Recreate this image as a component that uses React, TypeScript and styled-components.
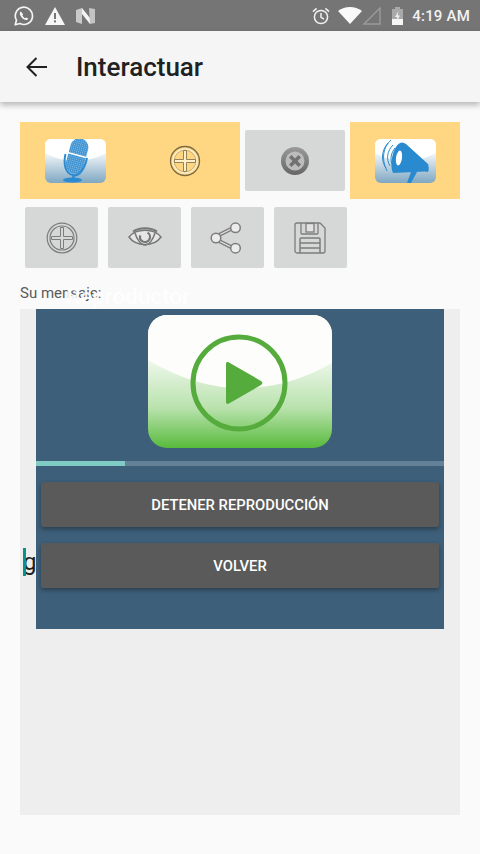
import React from "react";
import styled, { createGlobalStyle } from "styled-components";

const Global = createGlobalStyle`
  html, body { margin: 0; padding: 0; background: #fafafa; }
  body { font-family: Roboto, "Liberation Sans", sans-serif; }
  #root { width: 480px; height: 854px; overflow: hidden; }
  * { box-sizing: border-box; }
`;

const Page = styled.div`
  position: relative;
  width: 480px;
  height: 854px;
  background: #fafafa;
  display: flex;
  flex-direction: column;
`;

const StatusBar = styled.div`
  height: 31px;
  flex: none;
  background: #757575;
  display: flex;
  align-items: center;
  padding: 0 10px 0 14px;
  color: #f2f2f2;
`;

const StatusLeft = styled.div`
  display: flex;
  align-items: center;
  gap: 11px;
  flex: 1;
`;

const StatusRight = styled.div`
  display: flex;
  align-items: center;
`;

const Clock = styled.span`
  font-size: 15px;
  font-weight: 500;
  letter-spacing: 0.2px;
  margin-left: 9px;
`;

const AppBar = styled.header`
  height: 71px;
  flex: none;
  background: #f5f5f5;
  display: flex;
  align-items: center;
  padding-left: 24px;
  box-shadow: 0 3px 6px rgba(0, 0, 0, 0.28);
  position: relative;
  z-index: 1;
`;

const Title = styled.h1`
  margin: 0 0 0 28px;
  font-size: 26px;
  font-weight: 500;
  color: #212121;
`;

const Content = styled.main`
  flex: 1;
  display: flex;
  flex-direction: column;
  padding: 20px 20px 39px;
`;

const TopRow = styled.div`
  display: flex;
  align-items: center;
  gap: 5px;
  height: 77px;
`;

const HighlightCell = styled.div<{ $w: number }>`
  width: ${(p) => p.$w}px;
  height: 77px;
  background: #ffd782;
  display: flex;
  align-items: center;
  padding-left: 25px;
`;

const PlusSlot = styled.div`
  margin-left: 63px;
  display: flex;
`;

const GrayButton = styled.div<{ $w: number; $h: number }>`
  width: ${(p) => p.$w}px;
  height: ${(p) => p.$h}px;
  background: #d6d7d7;
  border-radius: 2px;
  display: flex;
  align-items: center;
  justify-content: center;
`;

const ToolRow = styled.div`
  display: flex;
  gap: 10px;
  margin: 8px 0 0 5px;
`;

const Label = styled.div`
  margin-top: 17px;
  height: 16px;
  font-size: 15px;
  line-height: 16px;
  color: #5a5a5a;
`;

const TextArea = styled.div`
  flex: 1;
  margin-top: 8px;
  background: #eeeeee;
  display: flex;
  align-items: center;
  padding-left: 3px;
`;

const Typed = styled.div`
  position: relative;
  font-size: 24px;
  line-height: 28px;
  height: 28px;
  color: #212121;
`;

const Caret = styled.span`
  position: absolute;
  left: 0;
  top: 0;
  width: 3px;
  height: 28px;
  background: #009688;
`;

const Dialog = styled.section`
  position: absolute;
  left: 36px;
  top: 283px;
  width: 408px;
`;

const DialogTitle = styled.div`
  height: 26px;
  padding-left: 30px;
  font-size: 22.5px;
  font-weight: 500;
  line-height: 26px;
  color: rgba(255, 255, 255, 0.93);
`;

const DialogPanel = styled.div`
  height: 320px;
  background: #3d5f79;
  display: flex;
  flex-direction: column;
`;

const PlayWrap = styled.div`
  display: flex;
  justify-content: center;
  padding-top: 6px;
  height: 152px;
`;

const Track = styled.div`
  height: 5px;
  background: #648197;
`;

const Fill = styled.div`
  height: 100%;
  background: #80cbc4;
`;

const Actions = styled.div`
  display: flex;
  flex-direction: column;
  gap: 16px;
  padding: 16px 5px 0;
`;

const ActionButton = styled.button`
  height: 45px;
  border: 0;
  border-radius: 2px;
  background: #5a5a5a;
  color: #fff;
  font-family: Roboto, sans-serif;
  font-size: 14.8px;
  font-weight: 500;
  box-shadow: 0 2px 4px rgba(0, 0, 0, 0.35);
`;

const WhatsApp = () => (
  <svg width="20" height="20" viewBox="0 0 20 20" fill="none">
    <path d="M1.2 18.8l1.3-4.6A8.6 8.6 0 1 1 6 17.5z" stroke="#f4f4f4" strokeWidth="1.7" strokeLinejoin="round" />
    <path d="M7 5.6c-.6.2-1.3 1-1.2 2.1.2 2.6 3.4 6 6.3 6.4 1.2.1 2.1-.7 2.2-1.5l-2.200-1.200-1 .9c-1-.4-2.200-1.600-2.700-2.700l.8-1z" fill="#f4f4f4" />
  </svg>
);

const Warning = () => (
  <svg width="20" height="18" viewBox="0 0 20 18">
    <path d="M10 0L20 18H0z" fill="#f6f6f6" />
    <rect x="9" y="6" width="2" height="6" fill="#757575" />
    <rect x="9" y="13.4" width="2" height="2" fill="#757575" />
  </svg>
);

const NLogo = () => (
  <svg width="19" height="16" viewBox="0 0 19 16">
    <path d="M0 2l6-2v16l-6-2z" fill="#c9c9c9" />
    <path d="M6 0l8 10v6L6 6z" fill="#f4f4f4" />
    <path d="M13 0l6 1v14l-5 1z" fill="#c4c4c4" />
  </svg>
);

const Alarm = () => (
  <svg width="18" height="18" viewBox="0 0 18 18" fill="none" stroke="#f2f2f2" strokeWidth="1.5">
    <circle cx="9" cy="10" r="6.6" />
    <path d="M9 6v4.300l3 1.800" />
    <path d="M1 4.600L4.600 1.400M17 4.600L13.400 1.400" />
  </svg>
);

const Wifi = () => (
  <svg width="24" height="17" viewBox="0 0 24 17" style={{ marginLeft: 8 }}>
    <path d="M0 4C7-1.300 17-1.300 24 4L12 17z" fill="#fafafa" />
  </svg>
);

const Signal = () => (
  <svg width="18" height="18" viewBox="0 0 18 18" fill="none" style={{ marginLeft: 1 }}>
    <path d="M1 17L17 1v16z" stroke="#9b9b9b" strokeWidth="1.4" />
  </svg>
);

const Battery = () => (
  <svg width="11" height="18" viewBox="0 0 11 18" style={{ marginLeft: 11 }}>
    <path d="M3 0h5v2h3v16H0V2h3z" fill="#a9a9a9" />
    <rect y="12" width="11" height="6" fill="#f6f6f6" />
    <path d="M6.500 4L3 10h2.300L4.500 14.500 8 8.500H5.700z" fill="#ededed" />
  </svg>
);

const BackArrow = () => (
  <svg width="24" height="24" viewBox="0 0 24 24" fill="none" stroke="#212121" strokeWidth="2">
    <path d="M23 12H3.500M12.500 3l-9 9 9 9" />
  </svg>
);

const Tile = ({ id, children }: { id: string; children?: React.ReactNode }) => (
  <svg width="61" height="44" viewBox="0 0 61 44">
    <defs>
      <linearGradient id={id} x1="0" y1="0" x2="0" y2="1">
        <stop offset="0.25" stopColor="#fff" />
        <stop offset="1" stopColor="#7fa7c2" />
      </linearGradient>
    </defs>
    <rect width="61" height="44" rx="6" fill={`url(#${id})`} />
    <path d="M0 14Q30.500 30 61 14V6a6 6 0 0 0-6-6H6a6 6 0 0 0-6 6z" fill="#fff" />
    {children}
  </svg>
);

const MicTile = () => (
  <Tile id="micG">
    <defs>
      <pattern id="micDots" width="2" height="2" patternUnits="userSpaceOnUse">
        <rect width="2" height="2" fill="#3f93d2" />
        <rect width="1" height="1" fill="#8cc0e6" />
      </pattern>
    </defs>
    <rect x="23" y="-1" width="18" height="36" rx="9" fill="url(#micDots)" transform="rotate(15 32 17)" />
    <path d="M22.500 13.500L41 18.500" stroke="#fff" strokeWidth="1.500" />
    <path d="M20.500 15c-2 9-1 19 7 21 6 2 12-5 14.500-17" fill="none" stroke="#2c8bd0" strokeWidth="2" />
    <path d="M29 36l-1.500 5" stroke="#2c8bd0" strokeWidth="2.500" />
    <ellipse cx="27.500" cy="41" rx="9.500" ry="2.500" fill="#2c8bd0" />
  </Tile>
);

const MegaphoneTile = () => (
  <Tile id="megG">
    <path d="M25 4c2-1 4-.5 6 1l22 20c1 3 1 6 0 8l-3-.5-32 1.500c-2-4-2-9-1-15 1-6 4-13 8-15z" fill="#2a8acf" />
    <ellipse cx="24" cy="19" rx="3" ry="7.500" fill="#fff" transform="rotate(8 24 19)" />
    <path d="M36 33l6 0-6 11h-4z" fill="#2a8acf" />
    <path d="M16 1C8 8 6 20 12 32M13 4C6 12 6 22 11 29M18 6c-6 6-7 14-3 21M20 9c-4 5-5 11-3 16" fill="none" stroke="#2a8acf" strokeWidth="1" />
  </Tile>
);

const PlusCircleGold = () => (
  <svg width="32" height="32" viewBox="0 0 32 32" fill="none">
    <circle cx="16" cy="16" r="14.500" stroke="#7c6a45" strokeWidth="1.300" />
    <circle cx="16" cy="16" r="12" stroke="#fbeecb" strokeWidth="1.500" />
    <circle cx="16" cy="16" r="10.800" stroke="#b49e6d" strokeWidth="0.700" />
    <path d="M14.500 5.500h3v9h9v3h-9v9h-3v-9h-9v-3h9z" fill="#fff0c8" stroke="#8a7750" strokeWidth="0.900" />
  </svg>
);

const CancelKnob = () => (
  <svg width="28" height="28" viewBox="0 0 28 28">
    <defs>
      <linearGradient id="knob" x1="0" y1="0" x2="0" y2="1">
        <stop offset="0" stopColor="#9a9a9a" />
        <stop offset="1" stopColor="#666" />
      </linearGradient>
    </defs>
    <circle cx="14" cy="14" r="14" fill="url(#knob)" />
    <circle cx="14" cy="14" r="9.500" fill="#bcbcbc" />
    <path d="M10.500 8L14 11.500 17.500 8 20 10.500 16.500 14 20 17.500 17.500 20 14 16.500 10.500 20 8 17.500 11.500 14 8 10.500z" fill="#727272" />
  </svg>
);

const PlusCircleGray = () => (
  <svg width="32" height="32" viewBox="0 0 32 32" fill="none" stroke="#7d7d7d">
    <circle cx="16" cy="16" r="14.800" strokeWidth="1.200" />
    <circle cx="16" cy="16" r="12" strokeWidth="1.200" />
    <path d="M14.500 5.500h3v9h9v3h-9v9h-3v-9h-9v-3h9z" strokeWidth="1" />
  </svg>
);

const Eye = () => (
  <svg width="34" height="24" viewBox="0 0 34 24" fill="none" stroke="#777">
    <path d="M1 11C8 2 26 2 33 11 26 21 8 21 1 11z" fill="#e6e6e6" strokeWidth="1.500" />
    <path d="M7 7c2 7 6 12 10 12s8-5 10-12" strokeWidth="1.500" />
    <circle cx="17" cy="11" r="5" strokeWidth="2.200" strokeDasharray="22 10" transform="rotate(-60 17 11)" />
    <path d="M5 5.500C11 1 23 1 29 5.500" strokeWidth="2" />
  </svg>
);

const Share = () => (
  <svg width="32" height="32" viewBox="0 0 32 32" fill="none" stroke="#7d7d7d" strokeWidth="1.500" style={{ marginLeft: -4 }}>
    <path d="M6 14.500L25 5M6 17.500L25 27" stroke="#7d7d7d" strokeWidth="4" />
    <path d="M6 14.500L25 5M6 17.500L25 27" stroke="#e6e6e6" strokeWidth="1.200" />
    <circle cx="25.500" cy="5.800" r="4.800" fill="#ececec" />
    <circle cx="25.500" cy="26.200" r="4.800" fill="#ececec" />
    <circle cx="6" cy="16" r="4.800" fill="#ececec" />
  </svg>
);

const Floppy = () => (
  <svg width="32" height="32" viewBox="0 0 32 32" fill="none" stroke="#7d7d7d" strokeWidth="1.300" style={{ marginLeft: -1 }}>
    <path d="M1 3a2 2 0 0 1 2-2h23l5 5v23a2 2 0 0 1-2 2H3a2 2 0 0 1-2-2z" />
    <path d="M7 1v10a1 1 0 0 0 1 1h15a1 1 0 0 0 1-1V1" />
    <rect x="12" y="1.500" width="8" height="8.500" fill="#e2e2e2" />
    <path d="M6 31V17a1 1 0 0 1 1-1h18a1 1 0 0 1 1 1v14M6 21h20M6 26h20" strokeWidth="1.500" />
  </svg>
);

const PlayTile = () => (
  <svg width="184" height="133" viewBox="0 0 184 133">
    <defs>
      <linearGradient id="playG" x1="0" y1="0" x2="0" y2="1">
        <stop offset="0.3" stopColor="#f4faf2" />
        <stop offset="0.7" stopColor="#b9e2ad" />
        <stop offset="1" stopColor="#58bb3c" />
      </linearGradient>
    </defs>
    <rect width="184" height="133" rx="19" fill="url(#playG)" />
    <path d="M0 45Q92 100 184 48V19A19 19 0 0 0 165 0H19A19 19 0 0 0 0 19z" fill="#fdfefb" />
    <circle cx="91" cy="68" r="46" fill="none" stroke="#55ac3d" strokeWidth="5" />
    <path d="M78 49c0-2 1.500-2.500 3-1.500l32 18.500c1.800 1 1.800 3 0 4L81 88.500c-1.500 1-3 .5-3-1.500z" fill="#55ac3d" />
  </svg>
);

export default function App() {
  return (
    <Page>
      <Global />
      <StatusBar>
        <StatusLeft>
          <WhatsApp />
          <Warning />
          <NLogo />
        </StatusLeft>
        <StatusRight>
          <Alarm />
          <Wifi />
          <Signal />
          <Battery />
          <Clock>4:19 AM</Clock>
        </StatusRight>
      </StatusBar>
      <AppBar>
        <BackArrow />
        <Title>Interactuar</Title>
      </AppBar>
      <Content>
        <TopRow>
          <HighlightCell $w={220}>
            <MicTile />
            <PlusSlot>
              <PlusCircleGold />
            </PlusSlot>
          </HighlightCell>
          <GrayButton $w={100} $h={61}>
            <CancelKnob />
          </GrayButton>
          <HighlightCell $w={110}>
            <MegaphoneTile />
          </HighlightCell>
        </TopRow>
        <ToolRow>
          <GrayButton $w={73} $h={61}>
            <PlusCircleGray />
          </GrayButton>
          <GrayButton $w={73} $h={61}>
            <Eye />
          </GrayButton>
          <GrayButton $w={73} $h={61}>
            <Share />
          </GrayButton>
          <GrayButton $w={73} $h={61}>
            <Floppy />
          </GrayButton>
        </ToolRow>
        <Label>Su mensaje:</Label>
        <TextArea>
          <Typed>
            gu
            <Caret />
          </Typed>
        </TextArea>
      </Content>
      <Dialog>
        <DialogTitle>Reproductor</DialogTitle>
        <DialogPanel>
          <PlayWrap>
            <PlayTile />
          </PlayWrap>
          <Track>
            <Fill style={{ width: `${(89 / 408) * 100}%` }} />
          </Track>
          <Actions>
            <ActionButton>DETENER REPRODUCCIÓN</ActionButton>
            <ActionButton>VOLVER</ActionButton>
          </Actions>
        </DialogPanel>
      </Dialog>
    </Page>
  );
}
